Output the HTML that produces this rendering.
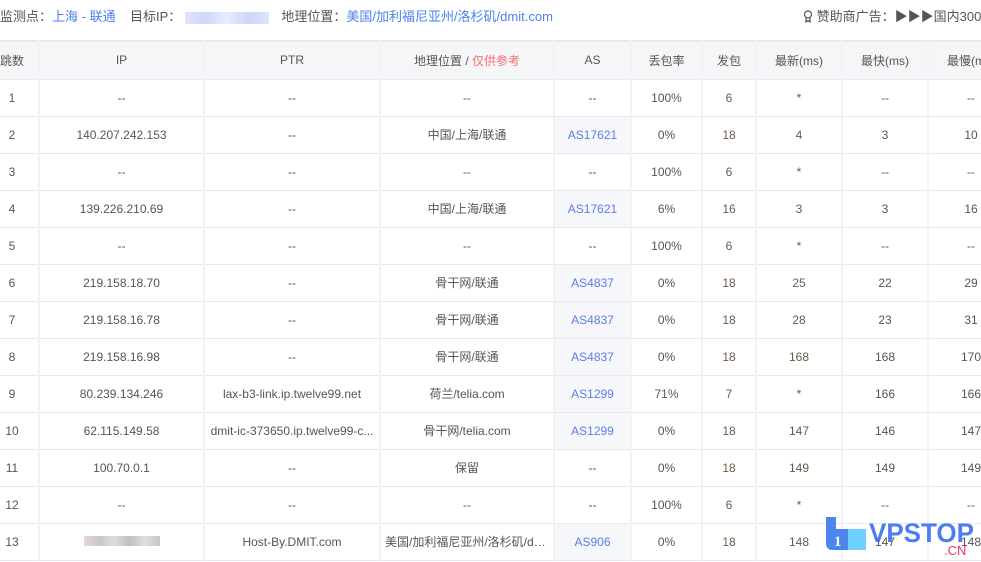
<!DOCTYPE html>
<html><head><meta charset="utf-8"><style>
*{margin:0;padding:0;box-sizing:border-box}
body{width:981px;height:562px;overflow:hidden;background:#fff;font-family:"Liberation Sans","Noto Sans CJK SC",sans-serif;font-size:12px;color:#555;position:relative}
.top{position:absolute;top:7px;left:0;height:20px;font-size:13px;color:#555;white-space:nowrap;line-height:20px}
.blue{color:#4f7ef0}
.blur{display:inline-block;width:84px;height:12px;background:linear-gradient(90deg,#dfe4fb,#cfd8fb,#e8ecfd,#cdd6fa,#dde3fb);vertical-align:middle;margin:0 12px 0 4px}
.ad{position:absolute;top:7px;left:803px;font-size:13px;line-height:20px;white-space:nowrap;color:#555}
table{position:absolute;top:40px;left:-14px;border-collapse:collapse;table-layout:fixed;width:1028px}
td,th{height:37px;text-align:center;border-bottom:1px solid #e6e9ef;border-right:2px solid #f1f3f6;font-weight:normal;white-space:nowrap;overflow:hidden;text-overflow:ellipsis;padding:0 4px}
th{background:#f5f6f8;color:#555;height:38px;border-top:2px solid #e6e9ef;font-size:12px}
td.as{color:#5b7fe8}
td.asb{background:#f5f7fa;color:#5b7fe8}
.r{color:#f56c6c}
.n{color:#6b5a48}
.logo{position:absolute;left:826px;top:517px}
</style></head><body>
<div class="top">监测点：<span class="blue">上海 - 联通</span>&nbsp;&nbsp;&nbsp;&nbsp;目标IP：<span class="blur"></span>地理位置：<span class="blue">美国/加利福尼亚州/洛杉矶/dmit.com</span></div>
<div class="ad"><svg width="10" height="13" viewBox="0 0 10 13" style="vertical-align:-2px"><circle cx="5" cy="4.5" r="3.5" fill="none" stroke="#555" stroke-width="1.2"/><path d="M3 8v4l2-1.5 2 1.5V8" fill="none" stroke="#555" stroke-width="1.2"/></svg> 赞助商广告：▶▶▶国内300M</div>
<table>
<colgroup><col style="width:53px"><col style="width:165px"><col style="width:176px"><col style="width:174px"><col style="width:77px"><col style="width:71px"><col style="width:54px"><col style="width:86px"><col style="width:86px"><col style="width:86px"></colgroup>
<tr><th>跳数</th><th>IP</th><th>PTR</th><th>地理位置 / <span class="r">仅供参考</span></th><th>AS</th><th>丢包率</th><th>发包</th><th>最新(ms)</th><th>最快(ms)</th><th>最慢(ms)</th></tr>
<tr><td>1</td><td>--</td><td>--</td><td>--</td><td>--</td><td>100%</td><td class="n">6</td><td class="n">*</td><td>--</td><td>--</td></tr>
<tr><td>2</td><td>140.207.242.153</td><td>--</td><td>中国/上海/联通</td><td class="asb">AS17621</td><td>0%</td><td class="n">18</td><td class="n">4</td><td>3</td><td>10</td></tr>
<tr><td>3</td><td>--</td><td>--</td><td>--</td><td>--</td><td>100%</td><td class="n">6</td><td class="n">*</td><td>--</td><td>--</td></tr>
<tr><td>4</td><td>139.226.210.69</td><td>--</td><td>中国/上海/联通</td><td class="asb">AS17621</td><td>6%</td><td class="n">16</td><td class="n">3</td><td>3</td><td>16</td></tr>
<tr><td>5</td><td>--</td><td>--</td><td>--</td><td>--</td><td>100%</td><td class="n">6</td><td class="n">*</td><td>--</td><td>--</td></tr>
<tr><td>6</td><td>219.158.18.70</td><td>--</td><td>骨干网/联通</td><td class="asb">AS4837</td><td>0%</td><td class="n">18</td><td class="n">25</td><td>22</td><td>29</td></tr>
<tr><td>7</td><td>219.158.16.78</td><td>--</td><td>骨干网/联通</td><td class="asb">AS4837</td><td>0%</td><td class="n">18</td><td class="n">28</td><td>23</td><td>31</td></tr>
<tr><td>8</td><td>219.158.16.98</td><td>--</td><td>骨干网/联通</td><td class="asb">AS4837</td><td>0%</td><td class="n">18</td><td class="n">168</td><td>168</td><td>170</td></tr>
<tr><td>9</td><td>80.239.134.246</td><td>lax-b3-link.ip.twelve99.net</td><td>荷兰/telia.com</td><td class="asb">AS1299</td><td>71%</td><td class="n">7</td><td class="n">*</td><td>166</td><td>166</td></tr>
<tr><td>10</td><td>62.115.149.58</td><td>dmit-ic-373650.ip.twelve99-c...</td><td>骨干网/telia.com</td><td class="asb">AS1299</td><td>0%</td><td class="n">18</td><td class="n">147</td><td>146</td><td>147</td></tr>
<tr><td>11</td><td>100.70.0.1</td><td>--</td><td>保留</td><td>--</td><td>0%</td><td class="n">18</td><td class="n">149</td><td>149</td><td>149</td></tr>
<tr><td>12</td><td>--</td><td>--</td><td>--</td><td>--</td><td>100%</td><td class="n">6</td><td class="n">*</td><td>--</td><td>--</td></tr>
<tr><td>13</td><td><span style="display:inline-block;width:76px;height:10px;background:linear-gradient(90deg,#e6d8d8,#c8c8cc,#ddd,#bfc0c4,#e3ddd4,#c4c6c8)"></span></td><td>Host-By.DMIT.com</td><td>美国/加利福尼亚州/洛杉矶/dm...</td><td class="asb">AS906</td><td>0%</td><td class="n">18</td><td class="n">148</td><td>147</td><td>148</td></tr>
</table>
<svg class="logo" width="155" height="42" viewBox="0 0 155 42">
<rect x="14" y="12" width="26" height="21" fill="#6fd0ff"/>
<path d="M0 0h10v12h12v21H6a6 6 0 0 1-6-6z" fill="#4a86ee"/>
<text x="8" y="29" font-family="Liberation Serif,serif" font-weight="bold" font-size="15" fill="#fff">1</text>
<text x="43" y="25" font-family="Liberation Sans,sans-serif" font-weight="bold" font-size="27" fill="#3b6ff2" opacity=".9" textLength="105" lengthAdjust="spacingAndGlyphs">VPSTOP</text>
<text x="118" y="38" font-family="Liberation Sans,sans-serif" font-size="13" fill="#f0365a">.CN</text>
</svg>
</body></html>
